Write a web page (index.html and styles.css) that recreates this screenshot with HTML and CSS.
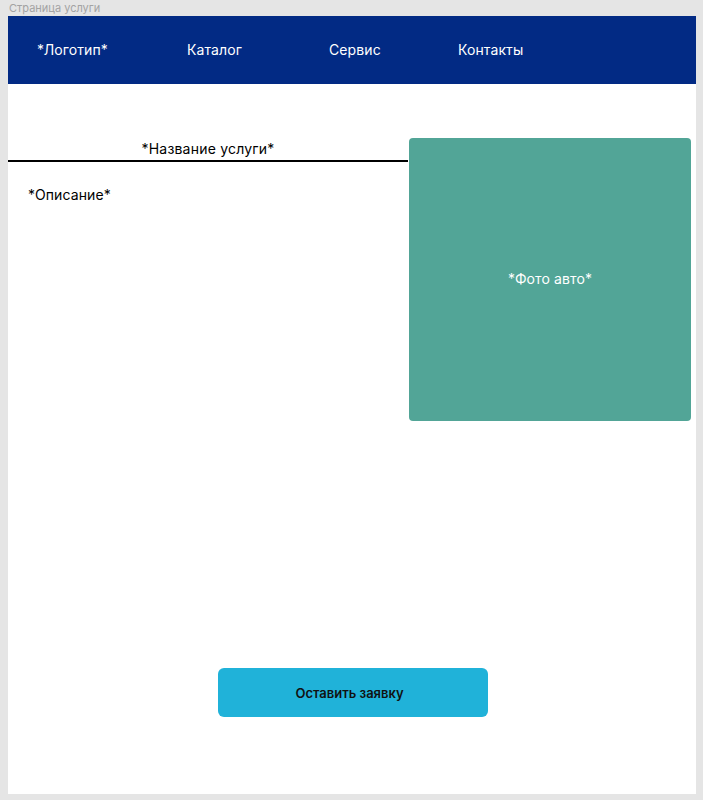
FILE: index.html
```html
<!DOCTYPE html>
<html lang="ru">
<head>
<meta charset="utf-8">
<title>Страница услуги</title>
<link rel="stylesheet" href="styles.css">
</head>
<body>
<div class="frame-label">Страница услуги</div>
<div class="frame">
  <header class="header">
    <nav class="nav">
      <span class="nav-item">*Логотип*</span>
      <span class="nav-item">Каталог</span>
      <span class="nav-item">Сервис</span>
      <span class="nav-item">Контакты</span>
    </nav>
  </header>
  <main class="content">
    <section class="info">
      <h1 class="title">*Название услуги*</h1>
      <p class="desc">*Описание*</p>
    </section>
    <div class="photo">*Фото авто*</div>
  </main>
  <div class="actions">
    <button class="btn">Оставить заявку</button>
  </div>
</div>
</body>
</html>
```

FILE: styles.css
```css
* { box-sizing: border-box; }
html, body { margin: 0; padding: 0; }
body {
  background: #e5e5e5;
  font-family: Inter, "Noto Sans", sans-serif;
  width: 703px;
  height: 800px;
  overflow: hidden;
}
.frame-label {
  height: 16px;
  padding-left: 9px;
  font-size: 11px;
  line-height: 16px;
  color: #a3a3a3;
}
.frame {
  margin-left: 8px;
  width: 688px;
  height: 778px;
  background: #fff;
  display: flex;
  flex-direction: column;
}
.header {
  height: 68px;
  background: #022a84;
  display: flex;
  align-items: center;
  padding-bottom: 2px;
}
.nav {
  display: grid;
  grid-template-columns: 150px 142px 129px auto;
  padding-left: 29px;
  color: #fff;
  font-size: 14px;
  line-height: 17px;
  letter-spacing: 0.1px;
}
.content {
  display: flex;
  align-items: flex-start;
  padding-top: 54px;
  height: 337px;
}
.info {
  width: 400px;
  padding-top: 2px;
}
.title {
  margin: 0;
  font-size: 14px;
  font-weight: 400;
  line-height: 18px;
  text-align: center;
  letter-spacing: 0.2px;
  color: #000;
  border-bottom: 2px solid #000;
  padding-bottom: 2px;
}
.desc {
  margin: 0;
  padding: 24px 0 0 20px;
  font-size: 14px;
  line-height: 18px;
  letter-spacing: 0.1px;
  color: #000;
}
.photo {
  margin-left: 1px;
  width: 282px;
  height: 283px;
  padding-bottom: 2px;
  background: #52a597;
  border-radius: 4px;
  display: flex;
  align-items: center;
  justify-content: center;
  color: #fff;
  font-size: 14px;
  letter-spacing: 0.1px;
}
.actions {
  display: flex;
  justify-content: center;
  padding-top: 247px;
}
.btn {
  width: 270px;
  height: 49px;
  margin-left: 2px;
  padding: 0 7px 0 0;
  border: none;
  border-radius: 6px;
  background: #20b2d9;
  color: #111;
  font-family: Inter, "Noto Sans", sans-serif;
  font-size: 13px;
  font-weight: 600;
}
```
